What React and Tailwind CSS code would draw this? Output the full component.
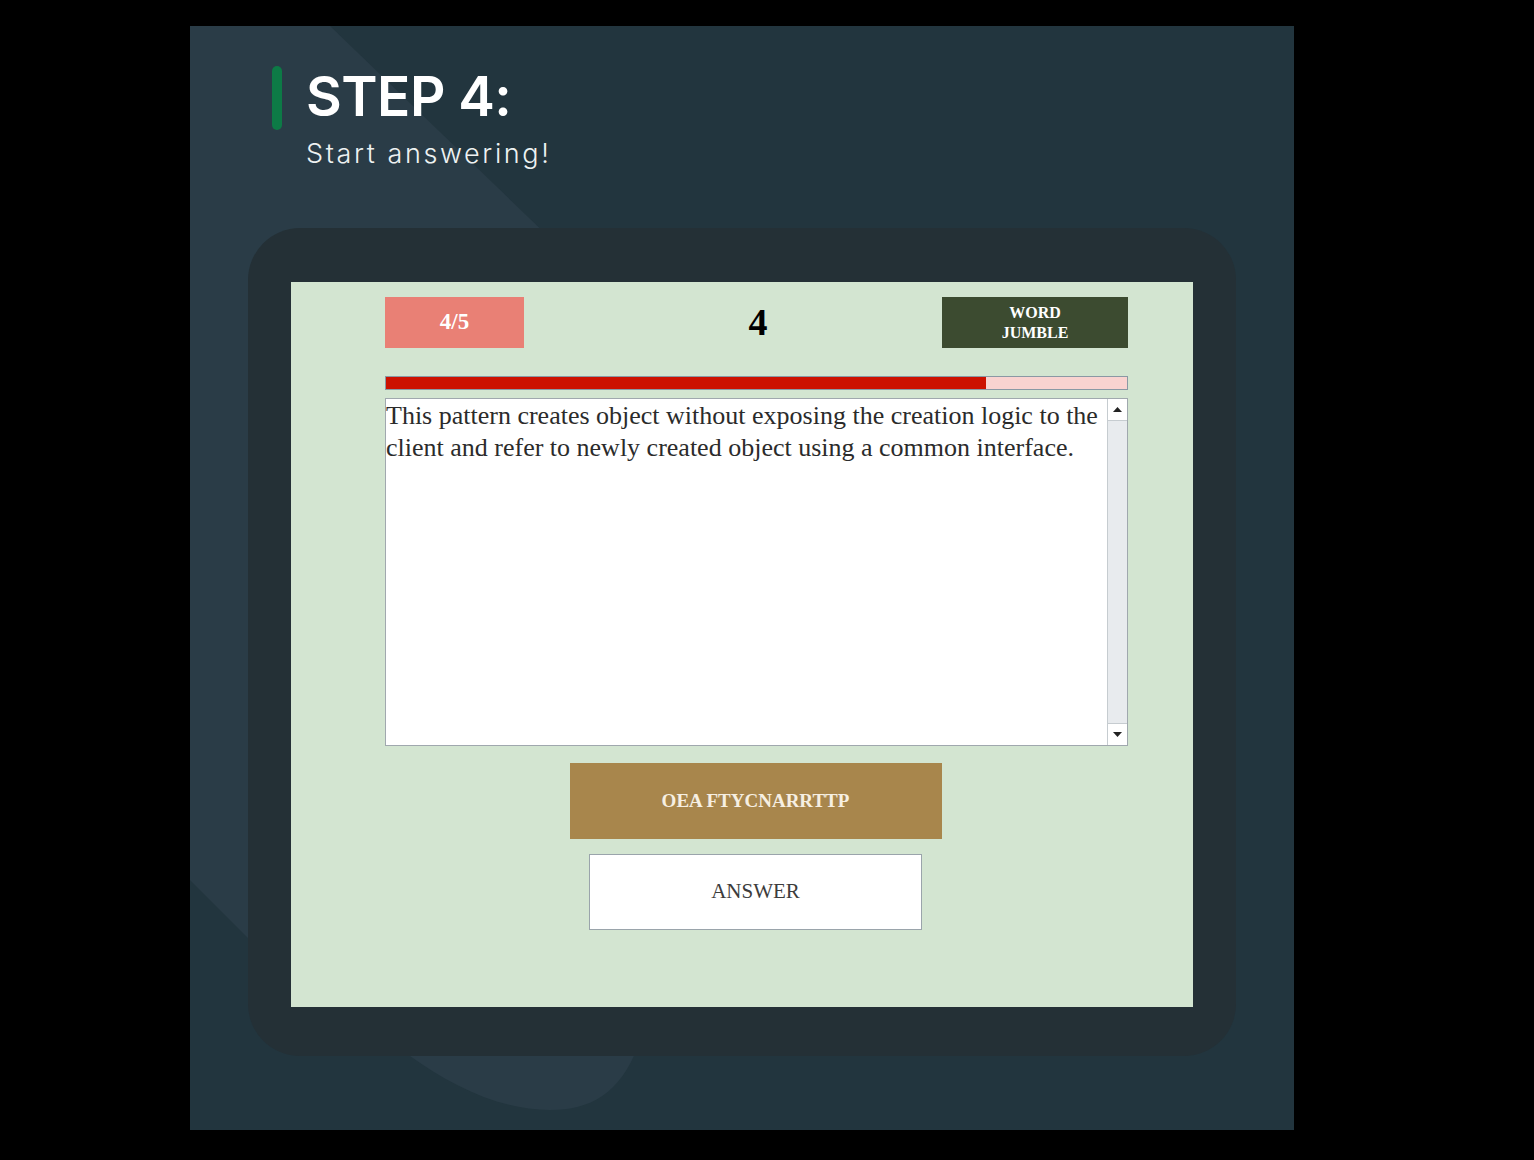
import React from "react";

function Backdrop() {
  return (
    <svg className="absolute inset-0" width="1104" height="1104" viewBox="0 0 1104 1104">
      <path d="M0 0 H140 L420 270 L420 990 L140 994 L0 854 Z" fill="#2a3c47" />
      <path d="M220 1020 H448 C430 1068 400 1084 360 1084 C310 1084 262 1060 220 1030 Z" fill="#2a3c47" />
    </svg>
  );
}

export default function App() {
  return (
    <div className="w-[1534px] h-[1160px] bg-black pt-[26px] pl-[190px]">
      <div className="relative w-[1104px] h-[1104px] bg-[#22353e] overflow-hidden">
        <Backdrop />
        <div className="relative flex flex-col h-full">
          {/* Heading */}
          <div className="flex gap-[24px] pl-[82px] pt-[40px] h-[202px]">
            <div className="w-[10px] h-[64px] rounded-full bg-[#0d7a46]" />
            <div className="flex flex-col text-white font-['Inter',sans-serif]">
              <h1 className="text-[55px] leading-[60px] font-semibold tracking-[-0.5px]">STEP 4:</h1>
              <p className="text-[27px] leading-[32px] mt-[12px] font-light tracking-[2.6px] text-[#eef2f2]">Start answering!</p>
            </div>
          </div>

          {/* Tablet */}
          <div className="ml-[58px] w-[988px] h-[828px] rounded-[52px] bg-[#243036] pt-[54px] pl-[43px]">
            <div className="w-[902px] h-[725px] bg-[#d3e5d1] pt-[15px] pl-[94px] font-['Liberation_Serif',serif]">
              <div className="w-[743px] flex flex-col">
                <div className="flex items-center h-[51px]">
                  <div className="w-[139px] h-[51px] bg-[#e98075] flex items-center justify-center text-white font-bold text-[23px]">4/5</div>
                  <div className="flex-1 text-center text-black font-bold text-[38px] pl-[50px]">4</div>
                  <div className="w-[186px] h-[51px] bg-[#3c4b30] flex items-center justify-center text-center text-white font-bold text-[16px] leading-[20px]">
                    WORD<br />JUMBLE
                  </div>
                </div>

                <div className="mt-[28px] h-[14px] border border-[#8a99a4] bg-[#f9d3d0] flex">
                  <div className="w-[600px] h-full bg-[#cc1100]" />
                </div>

                <div className="mt-[8px] h-[348px] border border-[#a0a8ae] bg-white flex">
                  <div className="flex-1 text-[#2b2b2b] text-[26px] leading-[32px] pt-[1px] tracking-[0px]">
                    This pattern creates object without exposing the creation logic to the client and refer to newly created object using a common interface.
                  </div>
                  <div className="w-[20px] border-l border-[#c6ccd0] bg-[#e8ebee] flex flex-col justify-between">
                    <div className="h-[22px] bg-white border-b border-[#c6ccd0] flex items-center justify-center">
                      <svg width="9" height="5" viewBox="0 0 9 5"><path d="M0 5 L4.5 0 L9 5 Z" fill="#222" /></svg>
                    </div>
                    <div className="h-[22px] bg-white border-t border-[#c6ccd0] flex items-center justify-center">
                      <svg width="9" height="5" viewBox="0 0 9 5"><path d="M0 0 L4.5 5 L9 0 Z" fill="#222" /></svg>
                    </div>
                  </div>
                </div>

                <div className="flex flex-col items-center mt-[17px] gap-[15px] pr-[2px]">
                  <div className="w-[372px] h-[76px] bg-[#a8864c] flex items-center justify-center text-[#f6efe2] font-bold text-[19px]">
                    OEA FTYCNARRTTP
                  </div>
                  <div className="w-[333px] h-[76px] bg-white border border-[#9aa4ab] flex items-center justify-center text-[#3c3c3c] text-[21px]">
                    ANSWER
                  </div>
                </div>
              </div>
            </div>
          </div>
        </div>
      </div>
    </div>
  );
}
